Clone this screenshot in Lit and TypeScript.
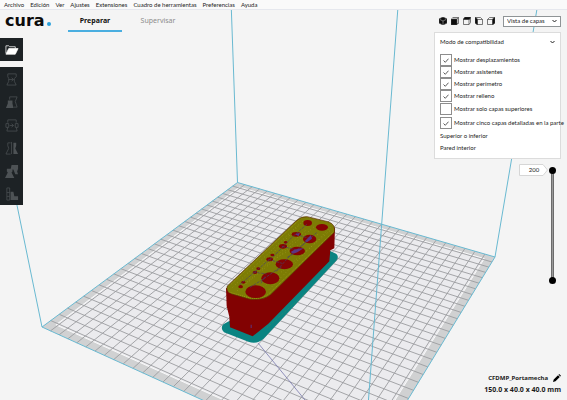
import { LitElement, html, svg, css } from "lit";
import { customElement, state } from "lit/decorators.js";

type Point = [number, number];

// Projects a point of the unit square (u across, v towards the viewer) onto the build plate.
function project(u: number, v: number): Point {
  const w = 1 - 0.1544 * u - 0.2613 * v;
  return [
    (181.1 * u - 206.5 * v + 237.5) / w,
    (34.8 * u + 59.05 * v + 182.5) / w,
  ];
}

function platePath(points: Point[]): string {
  return points
    .map(([u, v], i) => {
      const [x, y] = project(u, v);
      return `${i ? "L" : "M"}${x.toFixed(1)} ${y.toFixed(1)}`;
    })
    .join("");
}

const CELLS = 30;
const gridPath = Array.from({ length: CELLS - 1 }, (_, i) => {
  const t = (i + 1) / CELLS;
  return platePath([[t, 0], [t, 1]]) + platePath([[0, t], [1, t]]);
}).join("");
const platePoly = platePath([[0, 0], [1, 0], [1, 1], [0, 1]]) + "Z";
const innerPoly =
  platePath([[0.027, 0.027], [0.973, 0.027], [0.973, 0.973], [0.027, 0.973]]) + "Z";

@customElement("build-scene")
class BuildScene extends LitElement {
  static styles = css`
    :host { display: block; }
    svg { display: block; width: 100%; height: 100%; }
    .plate { fill: #d0d1d2; }
    .inner { fill: #ebebee; stroke: #f8f8f9; }
    .grid { fill: none; stroke: #9b9c9f; stroke-width: 0.9; }
    .volume { fill: none; stroke: #69b9d1; }
    .brim { fill: #0a8482; }
    .wall { fill: #820202; }
    .skin { fill: #7d7c04; stroke: #5d2a04; stroke-width: 2; }
    .edge { fill: none; stroke: #aaa41c; stroke-width: 2; stroke-dasharray: 3 3; }
    .speckle { fill: none; stroke: #9c981c; stroke-width: 3; stroke-dasharray: 2 8; }
    .travel { fill: none; stroke: #474066; stroke-width: 2; stroke-dasharray: 9 3; }
    .hole { fill: #860404; }
    .violet { fill: #5a3683; }
    .away { fill: none; stroke: #7979ad; stroke-width: 0.8; }
  `;

  render() {
    const holes = [
      [167, 275, 31, 19], [211, 235, 27, 18], [253, 193, 26, 15],
      [292, 153, 23, 13], [329, 117, 20, 13], [366, 82, 18, 10],
      [323, 69, 13, 9], [289, 103, 14, 7], [249, 139, 12, 7],
      [209, 178, 10, 6], [165, 217, 7, 5], [122, 260, 7, 5],
      [175, 206, 6, 4], [130, 247, 6, 4], [217, 165, 6, 4], [257, 127, 5, 4],
    ];
    return html`<svg viewBox="0 0 567 400" preserveAspectRatio="xMidYMid slice" aria-hidden="true">
      <path class="plate" d=${platePoly} />
      <path class="inner" d=${innerPoly} />
      <path class="grid" d=${gridPath} />
      <path class="volume" d=${platePoly} />
      <path class="volume" d="M237.5 182.5L231 0M495 257L538.500 0M42 327L-12 64" />
      <path class="away" d="M258 343L305 400" />
      <g transform="translate(200 200) scale(0.3333)">
        <path class="brim" d="M88 363L70 373Q60 385 72 397L145 425Q170 434 190 417L410 181Q418 169 408 161L384 150Z" />
        <path class="wall" d="M78 265L80 318L88 350L90 382L158 409L205 371L388 184L391 151L403 145L405 82L190 240Z" />
        <path class="skin" d="M82 258L287 64Q303 48 322 50L387 66Q408 75 403 97L212 284Q190 302 150 298L95 282Q76 275 82 258Z" />
        <path class="speckle" d="M98 262L300 70M112 272L318 90M140 250L345 78M190 262L390 92M150 232L310 62M208 268L395 78M178 202L360 100" />
        <path class="edge" d="M86 276L150 294Q185 299 207 281L400 96M94 252L296 61" />
        ${holes.map(([x, y, rx, ry]) => svg`<ellipse class="hole" cx=${x} cy=${y} rx=${rx} ry=${ry} />`)}
        <path class="travel" d="M118 255L190 194L222 168L280 108L322 72M150 262L186 240L235 206L271 166L311 132L350 98M160 216L200 222M205 178L246 190M246 139L290 150M288 103L330 116M183 250L196 228M228 214L246 200M262 172L282 160M305 138L320 124" />
        <path class="violet" d="M272 156Q290 144 311 145L292 157Q279 164 272 156ZM314 124L333 105L336 116L322 126ZM285 103L300 98L296 108Z" />
        <path class="edge" d="M202 382L330 268" opacity="0.3" />
        <path class="violet" d="M152 374h3v10h-3z" />
      </g>
      <path class="volume" d="M363 473L398.500 0" />
    </svg>`;
  }
}

const toolIcons = [
  // move
  svg`<path d="M3 2h9v3l-2 2v3l2 4H2l2-4V7L3 5zM4 8h5M7 6l2 2-2 2" />`,
  // scale
  svg`<path d="M5 2h8l-2 5 2 6H9M5 2v3" /><path class="solid" d="M3 6h5v3l1 5H1l2-5z" />`,
  // rotate
  svg`<path d="M3 2h9v3M2 14h11l-1-4M3 2v3M2 14l1-4M1 6h3v4H1zM11 6h3v4h-3zM5 8h4M7 6l2 2-2 2" />`,
  // mirror
  svg`<path d="M6 2H3v3l1 3-3 6h5M7 1v13" /><path class="solid" d="M9 2h3v3l-1 3 3 6H9z" />`,
  // per model settings
  svg`<path class="solid" d="M7 1h7v4l-1 3 1 3h-3L9 6H6zM2 5h6v3L7 9l3 6H0l3-6-1-1z" />`,
  // support blocker
  svg`<path d="M2 1h3v13H2zM2 6h3M2 10h3" /><path class="solid" d="M6 5h3l1 5h4v4H6z" />`,
];
const toolNames = ["Mover", "Escalar", "Rotar", "Espejo", "Ajustes por modelo", "Bloqueador de soporte"];

const viewIcons = [
  svg`<path class="fill" d="M4 0L8 2V6L4 8L0 6V2Z" /><path class="light" d="M1 2.500L4 4L7 2.500M4 4V7.500" />`,
  svg`<path class="fill" d="M0 2h6v6H0z" /><path d="M1.500 .5h6v6H6M6 2L7.500 .5" />`,
  svg`<path class="fill" d="M2 0h6L6.500 2.500H0z" /><path d="M.5 2.500h5.500v5H.5zM6 7.500L7.500 5.500V1" />`,
  svg`<path class="fill" d="M0 0L2.500 2V8L0 6z" /><path d="M2.500 2.500h5v5h-5zM.5 .5h5L7.500 2.500" />`,
  svg`<path class="fill" d="M8 0v6L5.500 8V2z" /><path d="M.5 2.500h5v5h-5zM.5 2.500L2.500 .5H7.500" />`,
];
const viewNames = ["Vista 3D", "Vista frontal", "Vista superior", "Vista izquierda", "Vista derecha"];

@customElement("app-root")
class AppRoot extends LitElement {
  @state() private top = 200;
  @state() private bottom = 0;

  static styles = css`
    :host {
      position: relative;
      display: flex;
      flex-direction: column;
      min-height: 100vh;
      overflow: hidden;
      background: #f4f4f4;
      color: #1c1c1c;
      font: 6px/8px Lato, "Noto Sans", sans-serif;
    }
    * { box-sizing: border-box; }
    button, input, select { margin: 0; padding: 0; border: 0; background: none; color: inherit; font: inherit; }
    .scene { position: absolute; inset: 0; }
    .menu, .header, .body { position: relative; }
    .menu { display: flex; gap: 6px; height: 10px; padding: 0 4px; background: #fafafa; border-bottom: 1px solid #e6e8ee; }
    .header { display: flex; align-items: center; height: 22px; padding-right: 6px; }
    .logo { display: flex; align-items: center; width: 68px; padding-left: 5px; color: #0c0c0c; font: bold 16px/20px "DejaVu Sans", sans-serif; }
    .dot { width: 4px; height: 4px; margin: 6px 0 0 2px; border-radius: 50%; background: #2ba1dc; }
    .tabs { display: flex; align-self: stretch; gap: 9px; flex: 1; }
    .tab { width: 54px; border-bottom: 2px solid transparent; color: #8c8c8c; font: 7px/21px "Noto Sans", sans-serif; text-align: center; text-decoration: none; }
    .tab.active { border-color: #4aaee0; color: #111; font-weight: bold; }
    .views { display: flex; gap: 4px; margin-right: 8px; }
    .views button { width: 8px; height: 8px; }
    .views svg { display: block; fill: none; stroke: #444; stroke-width: 0.7; }
    .views .fill { fill: #0c0c0c; }
    .views .light { stroke: #999; }
    .picker { display: grid; align-items: center; width: 58px; height: 11px; background: #fff; border: 1px solid #8f9496; }
    .picker select { grid-area: 1 / 1; width: 100%; height: 9px; padding-left: 3px; appearance: none; }
    .picker svg { grid-area: 1 / 1; justify-self: end; margin-right: 3px; pointer-events: none; }
    .chevron { width: 5px; height: 4px; fill: none; stroke: #222; }
    .body { display: flex; flex: 1; justify-content: space-between; }
    .rail { display: flex; flex-direction: column; align-items: flex-start; gap: 6px; padding-top: 6px; }
    .tools { display: flex; flex-direction: column; }
    .tool { display: grid; place-items: center; width: 23px; height: 23px; background: #1d2225; }
    .tool svg { width: 14px; height: 14px; fill: none; stroke: #4d5255; stroke-width: 0.8; }
    .tool .solid { fill: #4d5255; stroke: none; }
    .tool .folder { fill: #fff; stroke: #fff; }
    .side { display: flex; flex-direction: column; align-items: flex-end; padding: 0 6px 4px 0; }
    .panel { width: 127px; padding: 5px 5px 4px; background: #fff; border: 1px solid #dcdcdc; white-space: nowrap; }
    .title { display: flex; align-items: center; justify-content: space-between; width: 100%; height: 8px; margin-bottom: 8px; }
    .check { display: flex; align-items: center; gap: 2px; height: 12px; }
    .check.wide { height: 14px; }
    .box { display: grid; flex: none; place-items: center; }
    .box input, .box svg { grid-area: 1 / 1; }
    .box input { width: 12px; height: 12px; appearance: none; border: 1px solid #8d8d8d; background: #fff; }
    .box svg { width: 6px; height: 5px; fill: none; stroke: #333; stroke-width: 0.8; pointer-events: none; visibility: hidden; }
    .box input:checked + svg { visibility: visible; }
    .legend { height: 12px; line-height: 12px; }
    .layers { display: flex; align-items: flex-start; margin: 5px 5px 0 0; }
    .value { display: grid; width: 29px; height: 12px; }
    .value svg, .value input { grid-area: 1 / 1; }
    .value input { position: relative; width: 24px; padding-left: 6px; text-align: center; }
    .value svg { fill: #fff; stroke: #d6d6d6; }
    .slider { display: grid; width: 7px; height: 117px; margin: 3px 0 0 1px; background: linear-gradient(90deg, #555, #999 50%, #555) center / 3px 110px no-repeat; }
    .slider input { grid-area: 1 / 1; width: 7px; height: 117px; appearance: none; writing-mode: vertical-lr; direction: rtl; pointer-events: none; }
    .slider input::-webkit-slider-thumb { width: 7px; height: 7px; appearance: none; border-radius: 50%; background: #000; pointer-events: auto; }
    .job { margin-top: auto; font: bold 6px/12px "Noto Sans", sans-serif; text-align: right; }
    .name { display: flex; align-items: center; justify-content: flex-end; gap: 5px; }
    .name button { width: 8px; height: 8px; }
    .name svg { display: block; }
    .size { font-size: 7px; }
  `;

  private check(label: string, on: boolean, wide = false) {
    return html`<label class="check ${wide ? "wide" : ""}">
      <span class="box"><input type="checkbox" .checked=${on} /><svg viewBox="0 0 6 5"><path d="M.5 2.500L2.300 4.300L5.500 .7" /></svg></span>
      <span>${label}</span>
    </label>`;
  }

  render() {
    const chevron = html`<svg class="chevron" viewBox="0 0 5 4"><path d="M.5 1L2.500 3L4.500 1" /></svg>`;
    const menus = ["Archivo", "Edición", "Ver", "Ajustes", "Extensiones", "Cuadro de herramientas", "Preferencias", "Ayuda"];
    return html`
      <build-scene class="scene"></build-scene>
      <nav class="menu">${menus.map((m) => html`<button>${m}</button>`)}</nav>
      <header class="header">
        <div class="logo">cura<span class="dot"></span></div>
        <nav class="tabs">
          <a class="tab active" href="#preparar">Preparar</a>
          <a class="tab" href="#supervisar">Supervisar</a>
        </nav>
        <div class="views">
          ${viewIcons.map((icon, i) => html`<button aria-label=${viewNames[i]}><svg viewBox="0 0 8 8">${icon}</svg></button>`)}
        </div>
        <div class="picker">
          <select aria-label="Modo de vista"><option>Vista de capas</option></select>${chevron}
        </div>
      </header>
      <main class="body">
        <div class="rail">
          <button class="tool" aria-label="Abrir archivo">
            <svg viewBox="0 0 15 15"><path class="folder" d="M4 6h10l-3 6H1z" /><path d="M1 11V3h3l1 1h6v2" stroke="#fff" /></svg>
          </button>
          <div class="tools">
            ${toolIcons.map((icon, i) => html`<button class="tool" aria-label=${toolNames[i]}><svg viewBox="0 0 15 15">${icon}</svg></button>`)}
          </div>
        </div>
        <div class="side">
          <section class="panel">
            <button class="title"><span>Modo de compatibilidad</span>${chevron}</button>
            ${this.check("Mostrar desplazamientos", true)}
            ${this.check("Mostrar asistentes", true)}
            ${this.check("Mostrar perímetro", true)}
            ${this.check("Mostrar relleno", true)}
            ${this.check("Mostrar solo capas superiores", false, true)}
            ${this.check("Mostrar cinco capas detalladas en la parte", true, true)}
            <div class="legend">Superior o inferior</div>
            <div class="legend">Pared interior</div>
          </section>
          <div class="layers">
            <div class="value">
              <svg viewBox="0 0 29 12"><path d="M.5 .5H24L28.500 6L24 11.500H.5Z" /></svg>
              <input aria-label="Capa" .value=${String(this.top)} />
            </div>
            <div class="slider">
              <input type="range" aria-label="Capa inferior" min="0" max="200" .value=${String(this.bottom)}
                @input=${(e: Event) => (this.bottom = +(e.target as HTMLInputElement).value)} />
              <input type="range" aria-label="Capa superior" min="0" max="200" value="200"
                @input=${(e: Event) => (this.top = +(e.target as HTMLInputElement).value)} />
            </div>
          </div>
          <div class="job">
            <div class="name">CFDMP_Portamecha
              <button aria-label="Cambiar nombre"><svg viewBox="0 0 8 8"><path d="M0 8L.7 5.500L5 1.200L6.800 3L2.500 7.300ZM5.500 .7L6.200 0L8 1.800L7.300 2.500Z" /></svg></button>
            </div>
            <div class="size">150.0 x 40.0 x 40.0 mm</div>
          </div>
        </div>
      </main>
    `;
  }
}
